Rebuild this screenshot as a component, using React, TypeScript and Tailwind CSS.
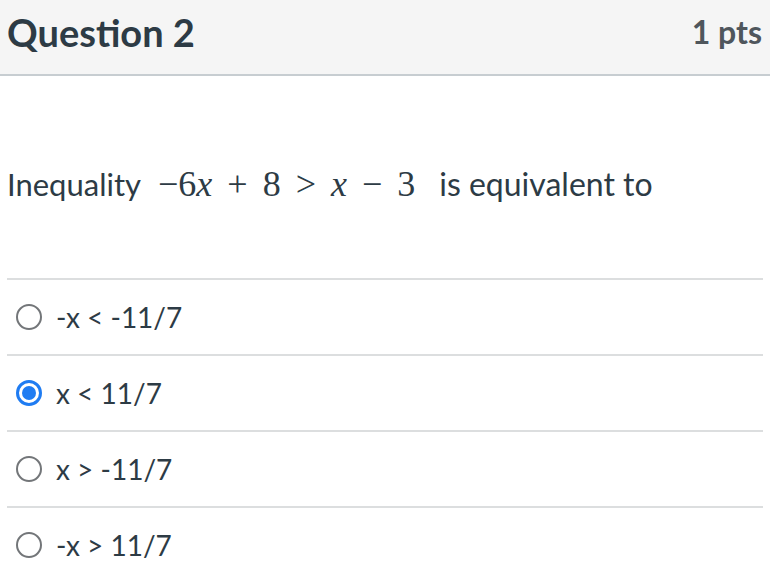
import React from "react";

const options = [
  { label: "-x < -11/7", checked: false },
  { label: "x < 11/7", checked: true },
  { label: "x > -11/7", checked: false },
  { label: "-x > 11/7", checked: false },
];

function Radio({ checked }: { checked: boolean }) {
  if (checked) {
    return (
      <span className="flex h-[26px] w-[26px] shrink-0 items-center justify-center rounded-full border-[3px] border-[#1f7cf2] bg-white">
        <span className="h-[14px] w-[14px] rounded-full bg-[#1f7cf2]" />
      </span>
    );
  }
  return (
    <span className="h-[26px] w-[26px] shrink-0 rounded-full border-2 border-[#737679] bg-white" />
  );
}

export default function App() {
  return (
    <div className="h-[576px] w-[770px] overflow-hidden bg-white font-['Lato','Noto_Sans',sans-serif] text-[#2d3b45]">
      <div className="flex h-[76px] items-center justify-between border-b-2 border-[#c7cdd1] bg-[#f5f5f5] pl-[7px] pr-[8px] pb-[10px]">
        <h2 className="text-[38px] font-bold leading-none">Question 2</h2>
        <span className="text-[32px] font-bold leading-none text-[#4f565c]">1 pts</span>
      </div>
      <div className="px-[7px]">
        <p className="mt-[88px] flex items-baseline text-[31px] leading-[40px]">
          <span>Inequality</span>
          <span className="ml-[17px] font-['Liberation_Serif','DejaVu_Serif',serif] text-[36px]">
            −6<i>x</i>
            <span className="mx-[15px]">+</span>8
            <span className="mx-[15px]">&gt;</span>
            <i>x</i>
            <span className="mx-[15px]">−</span>3
          </span>
          <span className="ml-[24px] text-[32px]">is equivalent to</span>
        </p>
        <div className="mt-[74px]">
          {options.map((o) => (
            <div
              key={o.label}
              className="flex h-[76px] items-center gap-[14px] border-t-2 border-[#dcdedf] pl-[9px]"
            >
              <Radio checked={o.checked} />
              <span className="text-[28px] leading-none">{o.label}</span>
            </div>
          ))}
        </div>
      </div>
    </div>
  );
}
